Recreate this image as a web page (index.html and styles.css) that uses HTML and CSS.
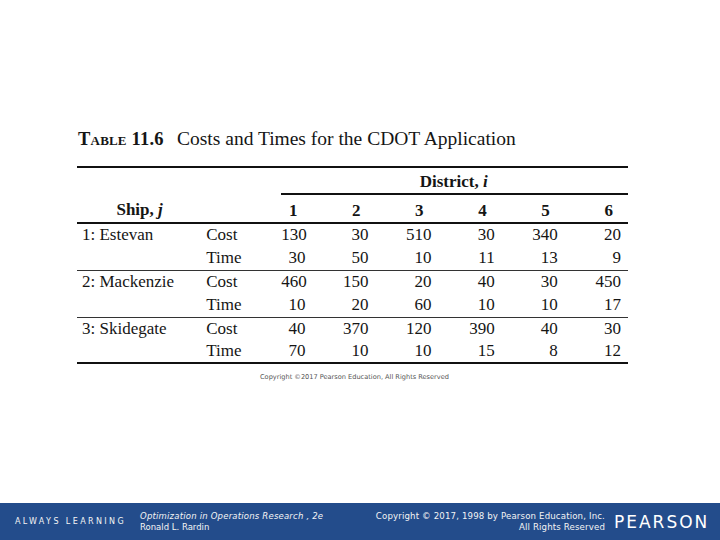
FILE: index.html
```html
<!DOCTYPE html>
<html>
<head>
<meta charset="utf-8">
<link rel="stylesheet" href="styles.css">
</head>
<body>
<div class="page">
  <main class="content">
    <h1 class="title"><span class="label">Table 11.6</span><span class="caption">Costs and Times for the CDOT Application</span></h1>
    <table class="data">
      <colgroup>
        <col class="c-ship"><col class="c-type">
        <col class="c-n1"><col class="c-n"><col class="c-n"><col class="c-n"><col class="c-n"><col class="c-n">
      </colgroup>
      <thead>
        <tr class="district-row">
          <th></th><th></th>
          <th colspan="6" class="district">District, <i>i</i></th>
        </tr>
        <tr class="head-row">
          <th class="ship">Ship, <i>j</i></th><th></th>
          <th class="num-h">1</th><th class="num-h">2</th><th class="num-h">3</th><th class="num-h">4</th><th class="num-h">5</th><th class="num-h">6</th>
        </tr>
      </thead>
      <tbody class="grp">
        <tr><td class="name">1: Estevan</td><td class="kind">Cost</td><td class="n">130</td><td class="n">30</td><td class="n">510</td><td class="n">30</td><td class="n">340</td><td class="n">20</td></tr>
        <tr class="last"><td class="name"></td><td class="kind">Time</td><td class="n">30</td><td class="n">50</td><td class="n">10</td><td class="n">11</td><td class="n">13</td><td class="n">9</td></tr>
      </tbody>
      <tbody class="grp">
        <tr><td class="name">2: Mackenzie</td><td class="kind">Cost</td><td class="n">460</td><td class="n">150</td><td class="n">20</td><td class="n">40</td><td class="n">30</td><td class="n">450</td></tr>
        <tr class="last"><td class="name"></td><td class="kind">Time</td><td class="n">10</td><td class="n">20</td><td class="n">60</td><td class="n">10</td><td class="n">10</td><td class="n">17</td></tr>
      </tbody>
      <tbody class="grp final">
        <tr><td class="name">3: Skidegate</td><td class="kind">Cost</td><td class="n">40</td><td class="n">370</td><td class="n">120</td><td class="n">390</td><td class="n">40</td><td class="n">30</td></tr>
        <tr class="last"><td class="name"></td><td class="kind">Time</td><td class="n">70</td><td class="n">10</td><td class="n">10</td><td class="n">15</td><td class="n">8</td><td class="n">12</td></tr>
      </tbody>
    </table>
    <p class="small-copy">Copyright ©2017 Pearson Education, All Rights Reserved</p>
  </main>
  <footer class="footer">
    <div class="always">ALWAYS LEARNING</div>
    <div class="book">
      <div><i>Optimization in Operations Research , 2e</i></div>
      <div>Ronald L. Rardin</div>
    </div>
    <div class="rights">
      <div>Copyright © 2017, 1998 by Pearson Education, Inc.</div>
      <div>All Rights Reserved</div>
    </div>
    <div class="logo">PEARSON</div>
  </footer>
</div>
</body>
</html>
```
FILE: styles.css
```css
html, body {
  margin: 0;
  padding: 0;
  background: #ffffff;
}
.page {
  width: 720px;
  height: 540px;
  display: flex;
  flex-direction: column;
  overflow: hidden;
}
.content {
  flex: 1;
  padding: 128px 0 0 77px;
  font-family: "Liberation Serif", "Times New Roman", serif;
  color: #151515;
}
.title {
  margin: 0;
  height: 38px;
  font-size: 19.5px;
  font-weight: normal;
  line-height: 22px;
  display: flex;
  white-space: nowrap;
}
.title .label {
  font-weight: bold;
  font-variant: small-caps;
  margin-left: 1px;
  width: 99px;
  font-size: 18.5px;
  letter-spacing: 0.2px;
}
.data {
  border-collapse: collapse;
  border-top: 2px solid #111;
  border-bottom: 2px solid #111;
  font-size: 17px;
  table-layout: fixed;
  width: 551px;
}
.c-ship { width: 123px; }
.c-type { width: 81px; }
.c-n1 { width: 31px; }
.c-n { width: 63px; }
.data th, .data td {
  padding: 0;
  white-space: nowrap;
}
.district-row th { height: 22px; padding-top: 3px; }
.district {
  font-weight: bold;
  text-align: center;
  border-bottom: 2px solid #111;
  padding-right: 2px !important;
}
.head-row th {
  height: 23px;
  font-weight: bold;
  border-bottom: 2px solid #111;
  padding-top: 4px;
}
.ship { text-align: center; padding-left: 2px !important; }
.num-h { text-align: right; padding-right: 15px !important; }
.grp tr td { height: 21px; line-height: 18px; vertical-align: middle; padding-bottom: 2px; }
.grp tr.last td { border-bottom: 1px solid #333; }
.grp.final tr.last td { border-bottom: none; height: 19px; }
.name { padding-left: 5px !important; }
.kind { padding-left: 6px !important; }
.n { text-align: right; padding-right: 7px !important; }
.small-copy {
  margin: 9px 0 0 183px;
  font-family: "DejaVu Sans", Verdana, sans-serif;
  font-size: 6.6px;
  color: #555;
}
.footer {
  height: 37px;
  background: #234c8b;
  color: #f4f4f4;
  display: flex;
  align-items: center;
  font-family: "DejaVu Sans", Verdana, sans-serif;
  font-size: 8.5px;
  line-height: 11px;
}
.always {
  margin-left: 15px;
  width: 125px;
  font-size: 8px;
  letter-spacing: 2.4px;
  font-weight: normal;
}
.book {
  width: 220px;
  padding-top: 1px;
}
.book i { letter-spacing: 0.2px; }
.rights {
  width: 245px;
  text-align: right;
  padding-top: 1px;
  font-size: 8.6px;
  letter-spacing: 0.15px;
}
.logo {
  margin-left: 9px;
  font-family: "DejaVu Sans", Verdana, sans-serif;
  font-size: 17px;
  letter-spacing: 2px;
  font-weight: normal;
  color: #ffffff;
  padding-top: 1px;
}
```
